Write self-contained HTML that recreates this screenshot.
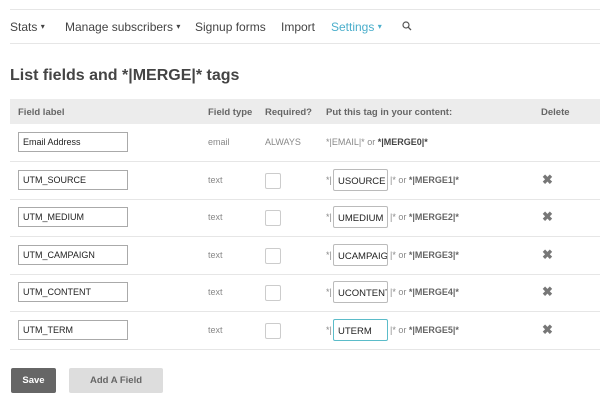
<!DOCTYPE html><html><head><style>
body{margin:0;width:600px;height:402px;background:#fff;font-family:"Liberation Sans",sans-serif;position:relative;overflow:hidden;color:#555}
.a{position:absolute;white-space:nowrap}
.nav{font-size:12px;color:#444;top:20px}
.car{font-size:8px;vertical-align:2px}
.hl{position:absolute;left:10px;right:0;height:1px;background:#e6e6e6}
.th{font-size:9.5px;font-weight:bold;color:#666;top:107px}
.inp{position:absolute;left:18px;height:20px;border:1px solid #aaa;font-size:9px;color:#222;line-height:18px;padding-left:4px;box-sizing:border-box;width:110px;white-space:nowrap}
.sm{font-size:9px;color:#888}
.cb{position:absolute;left:265px;width:14px;height:14px;border:1px solid #ccc;border-radius:2px}
.tg{position:absolute;left:333px;width:55px;height:22px;border:1px solid #bbb;border-radius:2px;font-size:9.5px;color:#222;box-sizing:border-box;overflow:hidden;white-space:nowrap;display:flex;align-items:center;padding:2px 0 0 4px}
.x{font-size:13px;color:#777;font-weight:bold;left:542px}
.m{color:#666;font-weight:bold}
</style></head><body>
<div class="hl" style="top:9px"></div>
<div class="hl" style="top:43px"></div>
<div class="a nav" style="left:10px">Stats <span class="car">▾</span></div>
<div class="a nav" style="left:65px">Manage subscribers <span class="car">▾</span></div>
<div class="a nav" style="left:195px">Signup forms</div>
<div class="a nav" style="left:281px">Import</div>
<div class="a nav" style="left:331px;color:#4aaecb">Settings <span class="car">▾</span></div>
<svg class="a" style="left:402px;top:21px" width="10" height="10" viewBox="0 0 10 10"><circle cx="4" cy="4" r="3" fill="none" stroke="#555" stroke-width="1.2"/><path d="M6.2 6.2L9 9" stroke="#555" stroke-width="1.3"/></svg>
<div class="a" style="left:10px;top:67px;font-size:16px;font-weight:bold;color:#444">List fields and *|MERGE|* tags</div>
<div class="a" style="left:10px;top:99px;width:590px;height:25px;background:#ececec"></div>
<div class="a th" style="left:18px">Field label</div>
<div class="a th" style="left:208px">Field type</div>
<div class="a th" style="left:265px">Required?</div>
<div class="a th" style="left:326px">Put this tag in your content:</div>
<div class="a th" style="left:541px">Delete</div>
<div class="inp" style="top:132px">Email Address</div>
<div class="a sm" style="left:208px;top:137px">email</div>
<div class="a sm" style="left:265px;top:137px">ALWAYS</div>
<div class="a sm" style="left:326px;top:137px">*|EMAIL|* or <b style="color:#444">*|MERGE0|*</b></div>
<div class="hl" style="top:161px"></div>

<div class="inp" style="top:170px">UTM_SOURCE</div><div class="a sm" style="left:208px;top:175px">text</div><div class="cb" style="top:173px"></div><div class="a sm" style="left:326px;top:175px">*|</div><div class="tg" style="top:169px">USOURCE</div><div class="a sm" style="left:390px;top:175px">|* or <span class="m">*|MERGE1|*</span></div><div class="a x" style="top:172px">✖</div>
<div class="hl" style="top:199px"></div>
<div class="inp" style="top:207px">UTM_MEDIUM</div><div class="a sm" style="left:208px;top:212px">text</div><div class="cb" style="top:210px"></div><div class="a sm" style="left:326px;top:212px">*|</div><div class="tg" style="top:206px">UMEDIUM</div><div class="a sm" style="left:390px;top:212px">|* or <span class="m">*|MERGE2|*</span></div><div class="a x" style="top:209px">✖</div>
<div class="hl" style="top:236px"></div>
<div class="inp" style="top:245px">UTM_CAMPAIGN</div><div class="a sm" style="left:208px;top:250px">text</div><div class="cb" style="top:248px"></div><div class="a sm" style="left:326px;top:250px">*|</div><div class="tg" style="top:244px">UCAMPAIGN</div><div class="a sm" style="left:390px;top:250px">|* or <span class="m">*|MERGE3|*</span></div><div class="a x" style="top:247px">✖</div>
<div class="hl" style="top:274px"></div>
<div class="inp" style="top:282px">UTM_CONTENT</div><div class="a sm" style="left:208px;top:287px">text</div><div class="cb" style="top:285px"></div><div class="a sm" style="left:326px;top:287px">*|</div><div class="tg" style="top:281px">UCONTENT</div><div class="a sm" style="left:390px;top:287px">|* or <span class="m">*|MERGE4|*</span></div><div class="a x" style="top:284px">✖</div>
<div class="hl" style="top:311px"></div>
<div class="inp" style="top:320px">UTM_TERM</div><div class="a sm" style="left:208px;top:325px">text</div><div class="cb" style="top:323px"></div><div class="a sm" style="left:326px;top:325px">*|</div><div class="tg" style="top:319px;border-color:#5bbcc9">UTERM</div><div class="a sm" style="left:390px;top:325px">|* or <span class="m">*|MERGE5|*</span></div><div class="a x" style="top:322px">✖</div>
<div class="hl" style="top:349px"></div>

<div class="a" style="left:11px;top:368px;width:45px;height:25px;background:#666;border-radius:2px;color:#fff;font-size:9.5px;font-weight:bold;text-align:center;line-height:25px">Save</div>
<div class="a" style="left:69px;top:368px;width:94px;height:25px;background:#ddd;border-radius:2px;color:#666;font-size:9.5px;font-weight:bold;text-align:center;line-height:25px">Add A Field</div>
</body></html>
